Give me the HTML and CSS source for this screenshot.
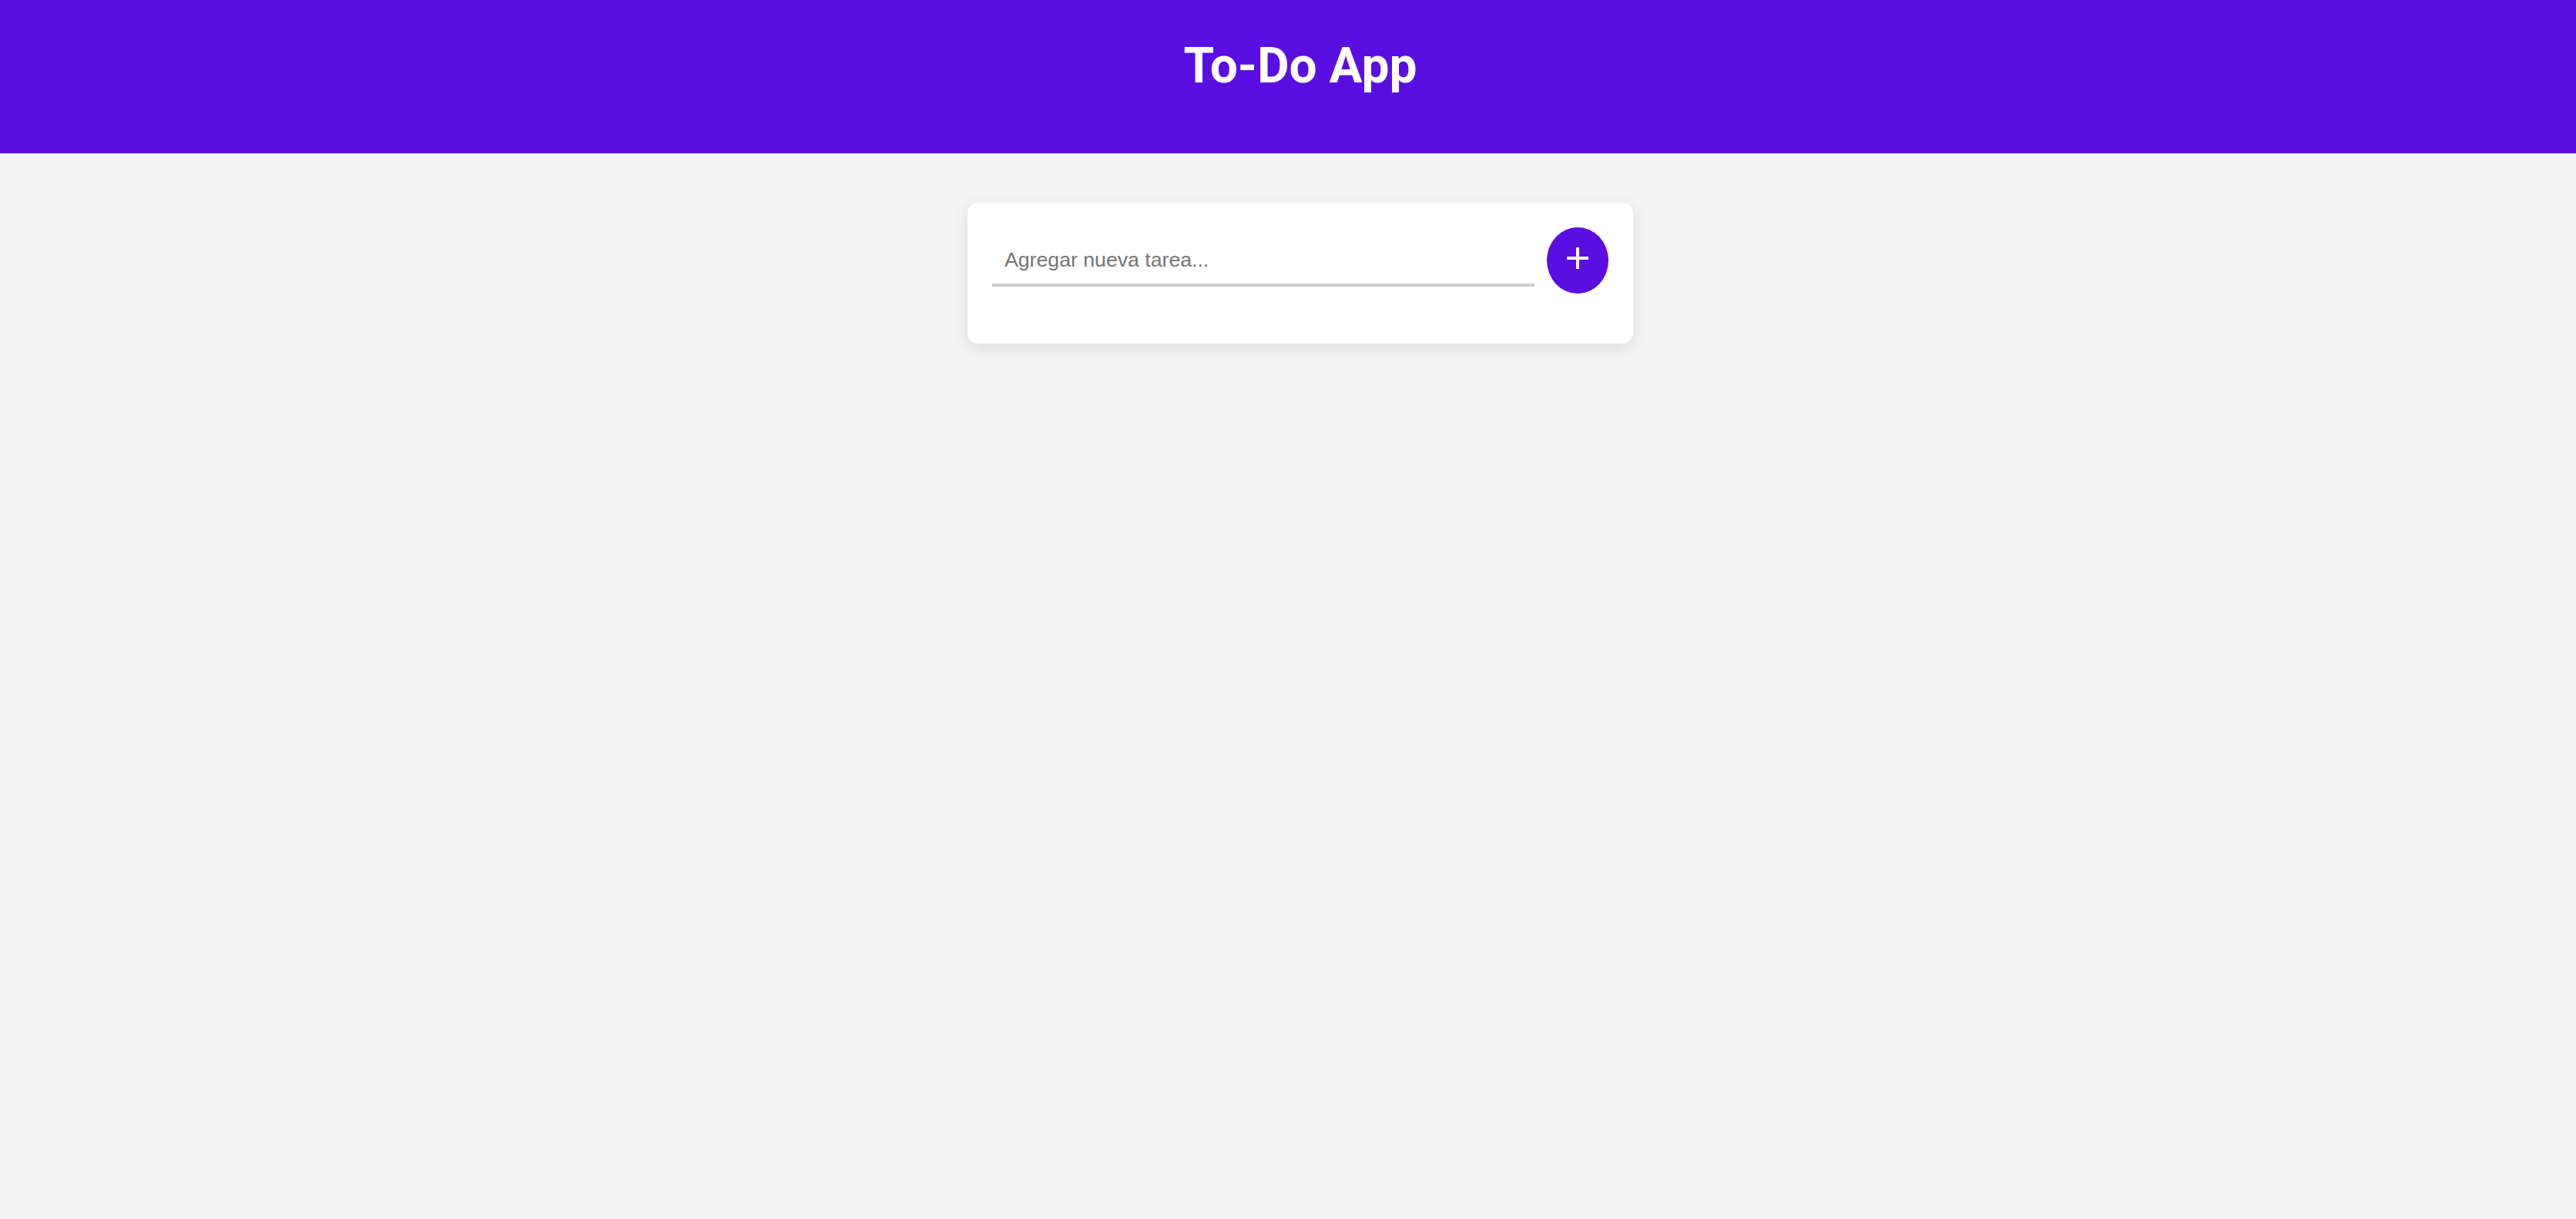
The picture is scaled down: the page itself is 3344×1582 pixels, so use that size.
FILE: index.html
```html
<!DOCTYPE html>
<html lang="es">
<head>
<meta charset="utf-8">
<title>To-Do App</title>
<link rel="stylesheet" href="styles.css">
</head>
<body>
  <header class="app-header">
    <h1 class="app-title">To-Do App</h1>
  </header>
  <main class="app-main">
    <section class="card">
      <form class="add-form" onsubmit="return false;">
        <input class="task-input" type="text" placeholder="Agregar nueva tarea...">
        <button class="add-btn" type="submit" aria-label="Agregar">
          <svg class="plus-icon" width="28" height="28" viewBox="0 0 28 28"><path d="M14 0V28M0 14H28" stroke="#fff" stroke-width="4" fill="none"/></svg>
        </button>
      </form>
      <ul class="task-list"></ul>
    </section>
  </main>
</body>
</html>
```
FILE: styles.css
```css
html, body {
  margin: 0;
  padding: 0;
}
body {
  background: #f4f4f4;
  font-family: Roboto, "Liberation Sans", Arial, sans-serif;
  min-height: 1582px;
}
.app-header {
  background: #5b0ee1;
  height: 199px;
  box-sizing: border-box;
  padding: 48px 0 0 32px;
  text-align: center;
}
.app-title {
  margin: 0;
  color: #fff;
  font-family: Roboto, "Liberation Sans", sans-serif;
  font-weight: 700;
  font-size: 64px;
  line-height: 75px;
}
.app-main {
  display: flex;
  justify-content: center;
  padding: 64px 0 0 32px;
}
.card {
  width: 864px;
  box-sizing: border-box;
  background: #fff;
  border-radius: 14px;
  padding: 32px 32px 32px;
  box-shadow: 0 6px 22px rgba(0, 0, 0, 0.1);
}
.add-form {
  display: flex;
  align-items: center;
  gap: 16px;
  margin: 0;
}
.task-input {
  flex: 1;
  height: 68px;
  box-sizing: border-box;
  border: none;
  border-bottom: 4px solid #cccccc;
  outline: none;
  padding: 2px 16px 0 16px;
  font-family: "Liberation Sans", Arial, sans-serif;
  font-size: 26.67px;
  color: #333;
  background: transparent;
}
.task-input::placeholder {
  color: #757575;
}
.add-btn {
  width: 80px;
  height: 86px;
  flex: none;
  border: none;
  border-radius: 50%;
  background: #5b0ee1;
  padding: 0;
  display: flex;
  align-items: center;
  justify-content: center;
  cursor: pointer;
}
.plus-icon {
  display: block;
  margin-bottom: 6px;
}
.task-list {
  list-style: none;
  margin: 33px 0 0;
  padding: 0;
}
```
